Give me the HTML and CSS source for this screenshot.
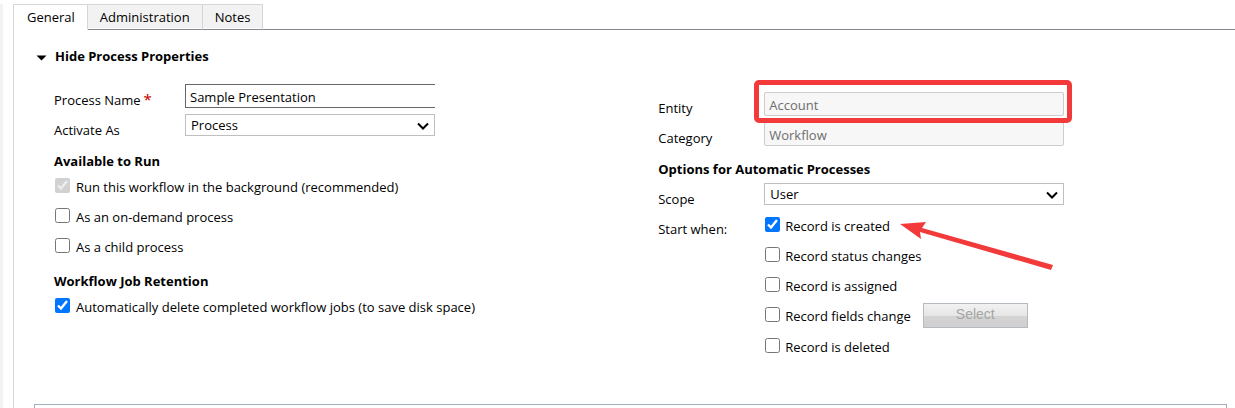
FILE: index.html
```html
<!DOCTYPE html>
<html lang="en">
<head>
<meta charset="utf-8">
<title>Process: Sample Presentation</title>
<link rel="stylesheet" href="styles.css">
</head>
<body>
<div class="page">
  <main class="panel">
    <nav class="tabs" role="tablist">
      <button class="tab tab-active" type="button" role="tab" aria-selected="true">General</button>
      <button class="tab" type="button" role="tab" aria-selected="false">Administration</button>
      <button class="tab" type="button" role="tab" aria-selected="false">Notes</button>
    </nav>
    <form class="properties">
      <button class="toggle" type="button" aria-expanded="true">
        <svg class="toggle-icon" viewBox="0 0 10 6" aria-hidden="true"><path d="M0 0.5H10L5 5.5Z"/></svg>
        Hide Process Properties
      </button>
      <div class="columns">
        <section class="column">
          <div class="field">
            <label class="field-label" for="name">Process Name<span class="required">*</span></label>
            <input class="text-input" id="name" type="text" value="Sample Presentation">
          </div>
          <div class="field">
            <label class="field-label" for="activate">Activate As</label>
            <div class="select-wrap">
              <select class="select" id="activate"><option>Process</option></select>
              <svg class="chevron" viewBox="0 0 12 8" aria-hidden="true"><path d="M1 1.5L6 6.5L11 1.5"/></svg>
            </div>
          </div>
          <h2 class="heading">Available to Run</h2>
          <label class="check"><input type="checkbox" checked disabled>Run this workflow in the background (recommended)</label>
          <label class="check"><input type="checkbox">As an on-demand process</label>
          <label class="check"><input type="checkbox">As a child process</label>
          <h2 class="heading">Workflow Job Retention</h2>
          <label class="check"><input type="checkbox" checked>Automatically delete completed workflow jobs (to save disk space)</label>
        </section>
        <section class="column column-right">
          <div class="field">
            <label class="field-label" for="entity">Entity</label>
            <div class="highlighted"><input class="text-input" id="entity" type="text" value="Account" disabled></div>
          </div>
          <div class="field">
            <label class="field-label" for="category">Category</label>
            <input class="text-input" id="category" type="text" value="Workflow" disabled>
          </div>
          <h2 class="heading">Options for Automatic Processes</h2>
          <div class="field">
            <label class="field-label" for="scope">Scope</label>
            <div class="select-wrap">
              <select class="select" id="scope"><option>User</option></select>
              <svg class="chevron" viewBox="0 0 12 8" aria-hidden="true"><path d="M1 1.5L6 6.5L11 1.5"/></svg>
            </div>
          </div>
          <div class="field" role="group" aria-labelledby="start">
            <span class="field-label" id="start">Start when:</span>
            <div class="triggers">
              <label class="check"><input type="checkbox" checked>Record is created</label>
              <label class="check"><input type="checkbox">Record status changes</label>
              <label class="check"><input type="checkbox">Record is assigned</label>
              <div class="check-row">
                <label class="check"><input type="checkbox">Record fields change</label>
                <button class="select-button" type="button" disabled>Select</button>
              </div>
              <label class="check"><input type="checkbox">Record is deleted</label>
              <svg class="arrow" viewBox="0 0 154 50" aria-hidden="true"><path d="M0 2L26 0L22 6L153 43L151 48L20 10L21 17Z"/></svg>
            </div>
          </div>
        </section>
      </div>
    </form>
    <div class="steps"></div>
  </main>
</div>
</body>
</html>
```
FILE: styles.css
```css
* {
  box-sizing: border-box;
}

body {
  margin: 0;
  background: #fff;
  color: #000;
  font: 13px/20px "Open Sans", "Noto Sans", sans-serif;
}

input,
select,
button {
  font: inherit;
}

.page {
  display: flex;
  min-height: 100vh;
  padding-top: 4px;
}

.page::before {
  content: "";
  width: 3px;
  margin-right: 10px;
  background: #f2f2f2;
}

.panel {
  display: flex;
  flex: 1;
  flex-direction: column;
  border-left: 1px solid #d6d6d6;
}

.tabs {
  display: flex;
  height: 26px;
}

.tabs::after {
  content: "";
  flex: 1;
  border-bottom: 1px solid #85858f;
}

.tab {
  padding: 0 12px 1px;
  border: solid #d6d6d6;
  border-width: 1px 1px 0 0;
  border-bottom: 1px solid #85858f;
  background: #f2f2f2;
  box-shadow: inset 0 -1px #fff;
  color: #000;
}

.tab-active {
  padding-left: 13px;
  border-bottom-color: #fff;
  background: #fff;
}

.properties {
  padding: 16px 19px 40px 22px;
}

.toggle {
  display: flex;
  align-items: center;
  gap: 8px;
  padding: 0;
  border: 0;
  background: none;
  color: #000;
  font-weight: 700;
}

.toggle-icon {
  width: 11px;
  height: 6px;
  margin-top: 4px;
}

.columns {
  display: grid;
  grid-template-columns: 52% 1fr;
  padding: 18px 0 0 18px;
}

.column {
  --label-width: 131px;
  --control-width: 250px;
}

.column-right {
  --label-width: 106px;
  --control-width: 300px;
  padding-top: 8px;
}

.column-right .heading {
  padding-bottom: 4px;
}

.field {
  display: flex;
  align-items: flex-start;
  min-height: 30px;
}

.field-label {
  width: var(--label-width);
  padding-top: 6px;
}

.required {
  margin-left: 3px;
  color: #c00;
  font-family: "Noto Sans", sans-serif;
  font-size: 15px;
  line-height: 16px;
}

.text-input {
  width: var(--control-width);
  height: 24px;
  padding: 1px 4px 0;
  border: 1px solid #666;
  border-right: 0;
  border-radius: 0;
}

.text-input:disabled {
  border: 1px solid #ccc;
  border-radius: 2px;
  background: #f7f7f7;
  color: #6d6d6d;
}

.select-wrap {
  position: relative;
  display: flex;
}

.select {
  width: var(--control-width);
  height: 22px;
  padding: 0 20px 0 5px;
  border: 1px solid #bfbfbf;
  border-radius: 0;
  background: #fff;
  color: #000;
  appearance: none;
}

.chevron {
  position: absolute;
  top: 8px;
  right: 6px;
  width: 12px;
  height: 8px;
  fill: none;
  stroke: #000;
  stroke-width: 2;
  pointer-events: none;
}

.heading {
  margin: 0;
  padding: 7px 0 3px;
  font-size: 13px;
  line-height: 20px;
}

.check {
  display: flex;
  align-items: flex-start;
  gap: 6px;
  height: 30px;
  padding: 3px 0 0 1px;
}

.check input {
  width: 15px;
  height: 15px;
  margin: 1px 0 0;
}

.triggers .check {
  gap: 5px;
}

.highlighted {
  position: relative;
  display: flex;
}

.highlighted::after {
  content: "";
  position: absolute;
  inset: -12px -8px -7px -10px;
  border: 5px solid #f23a3a;
  border-radius: 5px;
  pointer-events: none;
}

.triggers {
  position: relative;
}

.check-row {
  display: flex;
  align-items: flex-start;
  gap: 12px;
}

.select-button {
  width: 105px;
  height: 25px;
  margin-bottom: 6px;
  padding: 0 0 4px;
  border: 1px solid #b5bac0;
  background: linear-gradient(#f2f2f2, #e6e6e6 50%, #d4d4d4 51%, #d0d0d0);
  color: #a5a5a5;
  font: 14px/18px "Liberation Sans", Arial, sans-serif;
}

.arrow {
  position: absolute;
  top: 9px;
  left: 136px;
  width: 154px;
  height: 50px;
  fill: #f23a3a;
  pointer-events: none;
}

.steps {
  flex: 1;
  margin: 0 8px 0 20px;
  border: 1px solid #a3adbb;
  border-bottom: 0;
}
```
